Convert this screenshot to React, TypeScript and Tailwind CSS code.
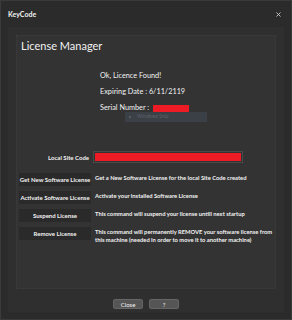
import { X } from "lucide-react";

const actions = [
  {
    label: "Get New Software License",
    text: "Get a New Software License for the local Site Code created",
  },
  { label: "Activate Software License", text: "Activate your installed Software License" },
  { label: "Suspend License", text: "This command will suspend your license untill next startup" },
  {
    label: "Remove License",
    text: "This command will permanently REMOVE your software license from this machine (needed in order to move it to another machine)",
  },
];

export default function App() {
  return (
    <div
      className="flex h-[320px] w-[292px] flex-col border border-[#3a3a3a] bg-[#2b2b2b] text-[#f2f2f2]"
      style={{ fontFamily: 'Lato, "Noto Sans", sans-serif' }}
    >
      {/* title bar */}
      <div className="flex h-[26px] items-center justify-between pl-[7px] pr-[9px]">
        <span className="text-[7px] font-bold">KeyCode</span>
        <X className="h-[7px] w-[7px] text-[#cfcfcf]" strokeWidth={3} />
      </div>

      <div className="mx-[7px] flex h-[285px] flex-col bg-[#2f2f2f] px-[8px] pt-[8px]">
        <div className="relative h-[254px] border border-dotted border-[#3d3d3d] bg-[#333333]">
          <div className="pl-[4px] pt-[3px] text-[11px] leading-[14px]">License Manager</div>

          <div className="ml-[83px] mt-[15px] text-[7.3px] leading-[16px]">
            <div>Ok, Licence Found!</div>
            <div>Expiring Date : 6/11/2119</div>
            <div className="flex items-center">
              <span>Serial Number :</span>
              <span className="ml-[4px] mt-[2px] h-[9px] w-[36px] bg-[#ed1c24]" />
            </div>
          </div>

          {/* stray tooltip from screen capture */}
          <div className="absolute left-[108px] top-[76px] flex h-[10px] w-[82px] items-center gap-[6px] bg-[#3b4047] pl-[4px] text-[5px] text-[#5d636b]">
            <span className="h-[2px] w-[2px] rounded-full bg-[#5d636b]" />
            <span>Windows Snip</span>
          </div>

          <div className="mt-[35px] flex items-center">
            <span className="w-[74px] whitespace-nowrap pr-[2px] text-right text-[6px] font-bold">Local Site Code</span>
            <div className="ml-[2px] h-[12px] w-[150px] border border-[#4a4a4a] p-[1px]">
              <div className="h-full w-full bg-[#ed1c24]" />
            </div>
          </div>

          <div className="mt-[10px] flex flex-col gap-[5px] pl-[2px]">
            {actions.map((a) => (
              <div key={a.label} className="flex items-start">
                <div className="flex h-[13px] w-[72px] shrink-0 items-center justify-center whitespace-nowrap rounded-[1px] bg-[#2a2a2a] text-[6px] font-bold">
                  {a.label}
                </div>
                <p className="ml-[4px] w-[182px] pt-[1px] text-[5.8px] font-bold leading-[8px]">{a.text}</p>
              </div>
            ))}
          </div>
        </div>

        <div className="mt-[10px] flex justify-center gap-[6px]">
          <button className="flex h-[10px] w-[30px] items-center justify-center rounded-[2px] border border-[#666] bg-[#555] text-[6px]">
            Close
          </button>
          <button className="flex h-[10px] w-[30px] items-center justify-center rounded-[2px] border border-[#666] bg-[#555] text-[6px]">
            ?
          </button>
        </div>
      </div>
    </div>
  );
}
